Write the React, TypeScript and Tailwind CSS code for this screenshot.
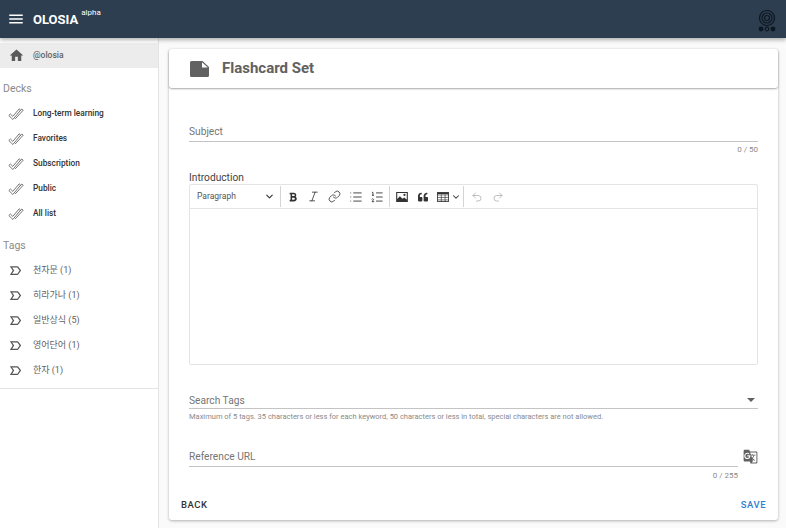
import { ChevronDown, Italic, Link, List, ListOrdered, Undo2, Redo2 } from 'lucide-react';
import type { ReactNode } from 'react';
import { FaBold, FaQuoteLeft } from 'react-icons/fa';
import { MdGTranslate, MdHome, MdMenu } from 'react-icons/md';

const decks = ['Long-term learning', 'Favorites', 'Subscription', 'Public', 'All list'];
const tags = ['천자문 (1)', '히라가나 (1)', '일반상식 (5)', '영어단어 (1)', '한자 (1)'];

const DoubleCheck = () => (
  <svg viewBox="0 0 16 16" className="w-4 h-4 text-[#666] flex-shrink-0" fill="none" stroke="currentColor" strokeWidth="0.9" strokeLinejoin="round">
    <path d="M0.800 9.500 2.400 8 4.800 10.400 11.200 2.800 12.600 4.100 4.900 13.500Z" />
    <path d="M6.600 11.600 7.500 12.600 15.200 4.200 13.800 3 11.800 5.200" />
  </svg>
);

const TagIcon = () => (
  <svg viewBox="0 0 24 24" className="w-[15px] h-[15px] text-[#555] flex-shrink-0" fill="currentColor">
    <path d="M15 19H3l4.500-7L3 5h12c.650 0 1.260.310 1.630.840L21 12l-4.370 6.160c-.370.520-.980.840-1.630.840zm-8.500-2H15l3.500-5L15 7H6.500l3.500 5-3.500 5z" />
  </svg>
);

const NoteIcon = () => (
  <svg viewBox="0 0 20 16" className="w-[20px] h-[16px] text-[#616161]" fill="currentColor">
    <path d="M1.500 0H12.500L19 6V14.500A1.500 1.500 0 0 1 17.500 16H1.500A1.500 1.500 0 0 1 0 14.500V1.500A1.500 1.500 0 0 1 1.500 0Z" />
    <path d="M12 1.200 17.800 6.500H12Z" fill="#ffffff" />
  </svg>
);

const Logo = () => (
  <svg viewBox="0 0 20 24" className="w-[20px] h-[24px] text-[#0e1720]" fill="none" stroke="currentColor">
    <circle cx="10" cy="9" r="7.500" strokeWidth="1.200" />
    <circle cx="10" cy="9" r="5" strokeWidth="1.200" />
    <circle cx="10" cy="9" r="2.500" strokeWidth="1.200" />
    <circle cx="4" cy="20" r="2.400" fill="currentColor" stroke="none" />
    <circle cx="10" cy="20" r="1.800" strokeWidth="1.200" />
    <circle cx="16" cy="20" r="2.400" fill="currentColor" stroke="none" />
  </svg>
);

const ImageIcon = () => (
  <svg viewBox="0 0 14 12" className="w-[12px] h-[10px] text-[#333]" fill="currentColor">
    <path fillRule="evenodd" d="M0 0H14V12H0ZM1.300 1.300V8.500L4.500 5 7.500 8 9.500 6.500 12.700 9V1.300Z" />
    <circle cx="10" cy="3.500" r="1.300" />
  </svg>
);

const TableIcon = () => (
  <svg viewBox="0 0 14 12" className="w-[12px] h-[10px] text-[#333]" fill="none" stroke="currentColor" strokeWidth="1">
    <rect x="0.500" y="0.500" width="13" height="11" fill="none" />
    <path d="M0 3.500H14M0 6.500H14M0 9.500H14M5 3V12M9.500 3V12" strokeWidth="0.800" />
    <path d="M0 1.500H14" strokeWidth="2" />
  </svg>
);

const Field = ({ label, low = false }: { label: string; low?: boolean }) => (
  <div className={`h-[19px] border-b border-[#c4c4c4] text-[10.200px] text-[#757575] ${low ? 'leading-[22px]' : 'leading-[18px]'}`}>{label}</div>
);

const Sep = () => <div className="w-px h-[21px] bg-[#d4d4d4]" />;

const Tool = ({ children }: { children: ReactNode }) => (
  <div className="w-[21px] flex items-center justify-center">{children}</div>
);

export default function App() {
  return (
    <div className="w-[786px] h-[528px] overflow-hidden bg-[#fafafa] flex flex-col font-['Roboto','Noto_Sans_CJK_KR',sans-serif]">
      {/* Header */}
      <header className="h-[38px] flex-shrink-0 bg-[#2c3e50] flex items-center pl-[7px] pr-[9px] shadow-[0_2px_4px_rgba(0,0,0,0.3)] z-10">
        <MdMenu className="w-[18px] h-[18px] text-white" />
        <span className="ml-[8px] text-white font-bold text-[13px] leading-none">OLOSIA</span>
        <span className="ml-[3px] mb-[13px] text-white text-[8px] leading-none">alpha</span>
        <div className="ml-auto mt-[4px]"><Logo /></div>
      </header>

      <div className="flex-1 flex min-h-0">
        {/* Sidebar */}
        <aside className="w-[159px] flex-shrink-0 bg-white border-r border-[#e4e4e4] pt-[5px] flex flex-col">
          <div className="h-[25px] bg-[#ececec] flex items-center pl-[10px] gap-[10px]">
            <MdHome className="w-[13px] h-[13px] text-[#5a5a5a] scale-125" />
            <span className="text-[8.500px] font-medium text-[#616161]">@olosia</span>
          </div>
          <div className="pl-[3px] mt-[13px] h-[16px] text-[10.500px] leading-[16px] text-[#8a8a8a]">Decks</div>
          <div className="mt-[4px] flex flex-col">
            {decks.map((d) => (
              <div key={d} className="h-[25px] flex items-center pl-[8px] gap-[9px]">
                <DoubleCheck />
                <span className="text-[8.300px] font-medium text-[#333]">{d}</span>
              </div>
            ))}
          </div>
          <div className="pl-[3px] mt-[12px] h-[16px] text-[10.500px] leading-[16px] text-[#8a8a8a]">Tags</div>
          <div className="mt-[4px] flex flex-col border-b border-[#e4e4e4] pb-[5px]">
            {tags.map((t) => (
              <div key={t} className="h-[25px] flex items-center pl-[8px] gap-[10px]">
                <TagIcon />
                <span className="text-[9px] text-[#616161]">{t}</span>
              </div>
            ))}
          </div>
        </aside>

        {/* Main */}
        <main className="flex-1 pl-[10px] pr-[8px] pt-[11px] pb-[8px]">
          <div className="h-full bg-white rounded-[3px] shadow-[0_1px_3px_rgba(0,0,0,0.3)] flex flex-col">
            <div className="h-[39px] flex-shrink-0 flex items-center pl-[21px] gap-[12px] rounded-[3px] shadow-[0_1px_2px_rgba(0,0,0,0.35)]">
              <NoteIcon />
              <h1 className="text-[15px] font-bold text-[#616161] leading-none">Flashcard Set</h1>
            </div>

            <div className="flex-1 flex flex-col px-[20px] pt-[35px]">
              <Field label="Subject" />
              <div className="mt-[3px] text-right text-[8px] leading-[10px] text-[#8a8a8a]">0 / 50</div>

              <div className="mt-[16px] text-[10.200px] leading-[13px] text-[#424242]">Introduction</div>
              <div className="h-[181px] rounded-[2px] border border-[#e4e4e4] flex flex-col text-[#333]">
                <div className="h-[24px] flex-shrink-0 border-b border-[#e4e4e4] flex items-center">
                  <div className="w-[90px] pl-[7px] pr-[5px] flex items-center justify-between">
                    <span className="text-[8.500px] text-[#555]">Paragraph</span>
                    <ChevronDown className="w-[11px] h-[11px]" strokeWidth={2.500} />
                  </div>
                  <Sep />
                  <div className="flex items-center ml-[1px]">
                    <Tool><FaBold className="w-[10px] h-[10px]" /></Tool>
                    <Tool><Italic className="w-[13px] h-[13px]" strokeWidth={1.500} /></Tool>
                    <Tool><Link className="w-[13px] h-[13px]" strokeWidth={1.500} /></Tool>
                    <Tool><List className="w-[14px] h-[14px]" strokeWidth={1.500} /></Tool>
                    <Tool><ListOrdered className="w-[14px] h-[14px]" strokeWidth={1.500} /></Tool>
                  </div>
                  <div className="ml-[2px]"><Sep /></div>
                  <div className="flex items-center ml-[1px]">
                    <Tool><ImageIcon /></Tool>
                    <Tool><FaQuoteLeft className="w-[10px] h-[10px]" /></Tool>
                    <div className="w-[30px] flex items-center justify-center gap-[2px] pl-[1px]">
                      <TableIcon />
                      <ChevronDown className="w-[10px] h-[10px]" strokeWidth={2.500} />
                    </div>
                  </div>
                  <Sep />
                  <div className="flex items-center ml-[2px] text-[#a9a9a9]">
                    <Tool><Undo2 className="w-[12px] h-[12px]" strokeWidth={1.500} /></Tool>
                    <Tool><Redo2 className="w-[12px] h-[12px]" strokeWidth={1.500} /></Tool>
                  </div>
                </div>
              </div>

              <div className="mt-[25px] relative">
                <Field label="Search Tags" low />
                <div className="absolute right-[3px] top-[8px] w-0 h-0 border-x-[4px] border-x-transparent border-t-[4px] border-t-[#616161]" />
              </div>
              <div className="mt-[3px] text-[7.500px] leading-[10px] text-[#8a8a8a]">
                Maximum of 5 tags. 35 characters or less for each keyword, 50 characters or less in total, special characters are not allowed.
              </div>

              <div className="mt-[26px] flex items-start gap-[5px]">
                <div className="flex-1">
                  <Field label="Reference URL" />
                  <div className="mt-[4px] text-right text-[8px] leading-[10px] text-[#8a8a8a]">0 / 255</div>
                </div>
                <MdGTranslate className="w-[15px] h-[15px] text-[#616161] mt-[1px]" />
              </div>
            </div>

            <div className="h-[31px] flex-shrink-0 flex items-center justify-between pl-[12px] pr-[12px] pt-[2px] text-[9.500px] font-medium tracking-[0.5px]">
              <span className="text-[#333]">BACK</span>
              <span className="text-[#2f80d0]">SAVE</span>
            </div>
          </div>
        </main>
      </div>
    </div>
  );
}
